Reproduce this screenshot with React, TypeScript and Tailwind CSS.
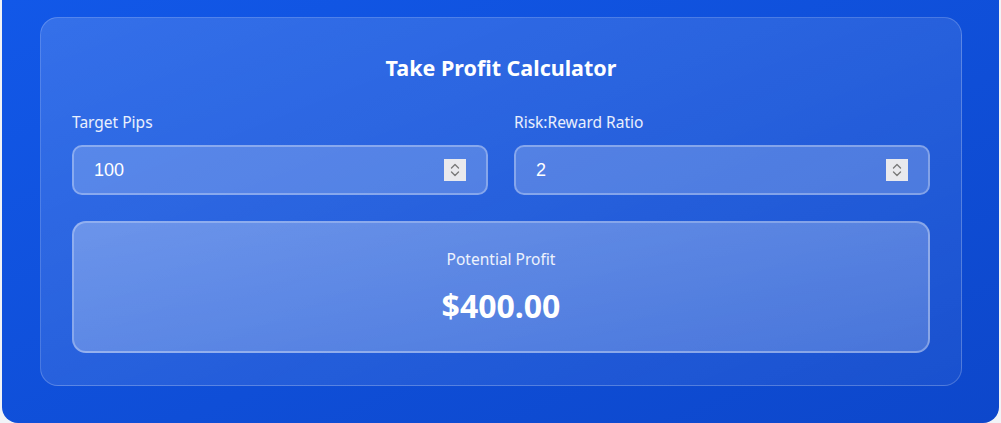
import React from "react";

function Spinner() {
  return (
    <div className="flex h-[22px] w-[22px] shrink-0 items-center justify-center bg-[#e9e9ed]">
      <svg width="12" height="18" viewBox="0 0 12 18" fill="none" stroke="#7a7a7a" strokeWidth="1.4" strokeLinecap="round" strokeLinejoin="round">
        <path d="M2.5 7 L6 3.5 L9.5 7" />
        <path d="M2.5 11 L6 14.5 L9.5 11" />
      </svg>
    </div>
  );
}

function Field({ label, value }: { label: string; value: string }) {
  return (
    <div className="flex flex-1 flex-col">
      <label className="mb-[12px] text-[15.5px] leading-[22px] text-white/90">{label}</label>
      <div className="flex h-[50px] items-center rounded-[10px] border-2 border-white/30 bg-white/20 pl-[20px] pr-[20px]">
        <input
          type="text"
          defaultValue={value}
          className="min-w-0 flex-1 bg-transparent text-[18px] text-white outline-none"
          style={{ fontFamily: '"Liberation Sans", Arial, sans-serif' }}
        />
        <Spinner />
      </div>
    </div>
  );
}

export default function App() {
  return (
    <div className="min-h-[423px] bg-[#f1f3f7]" style={{ fontFamily: '"Noto Sans", "Open Sans", sans-serif' }}>
      <div className="ml-[2px] h-[423px] w-[997px] rounded-b-[16px] bg-gradient-to-br from-[#1258e8] to-[#0d47cb] pl-[38px] pr-[37px] pt-[17px]">
        <div className="flex h-[369px] flex-col rounded-[18px] border border-white/20 bg-gradient-to-br from-white/15 to-white/5 px-[31px] pt-[36px]">
          <h2 className="text-center text-[21.5px] font-bold leading-[28px] text-white">Take Profit Calculator</h2>
          <div className="mt-[29px] flex gap-[26px]">
            <Field label="Target Pips" value="100" />
            <Field label="Risk:Reward Ratio" value="2" />
          </div>
          <div className="mt-[26px] flex h-[132px] flex-col items-center rounded-[14px] border-2 border-white/30 bg-gradient-to-br from-white/30 to-white/20 pt-[24px]">
            <div className="text-[15.5px] leading-[24px] text-white/90">Potential Profit</div>
            <div className="mt-[16px] text-[32px] font-bold leading-[38px] text-white">$400.00</div>
          </div>
        </div>
      </div>
    </div>
  );
}
